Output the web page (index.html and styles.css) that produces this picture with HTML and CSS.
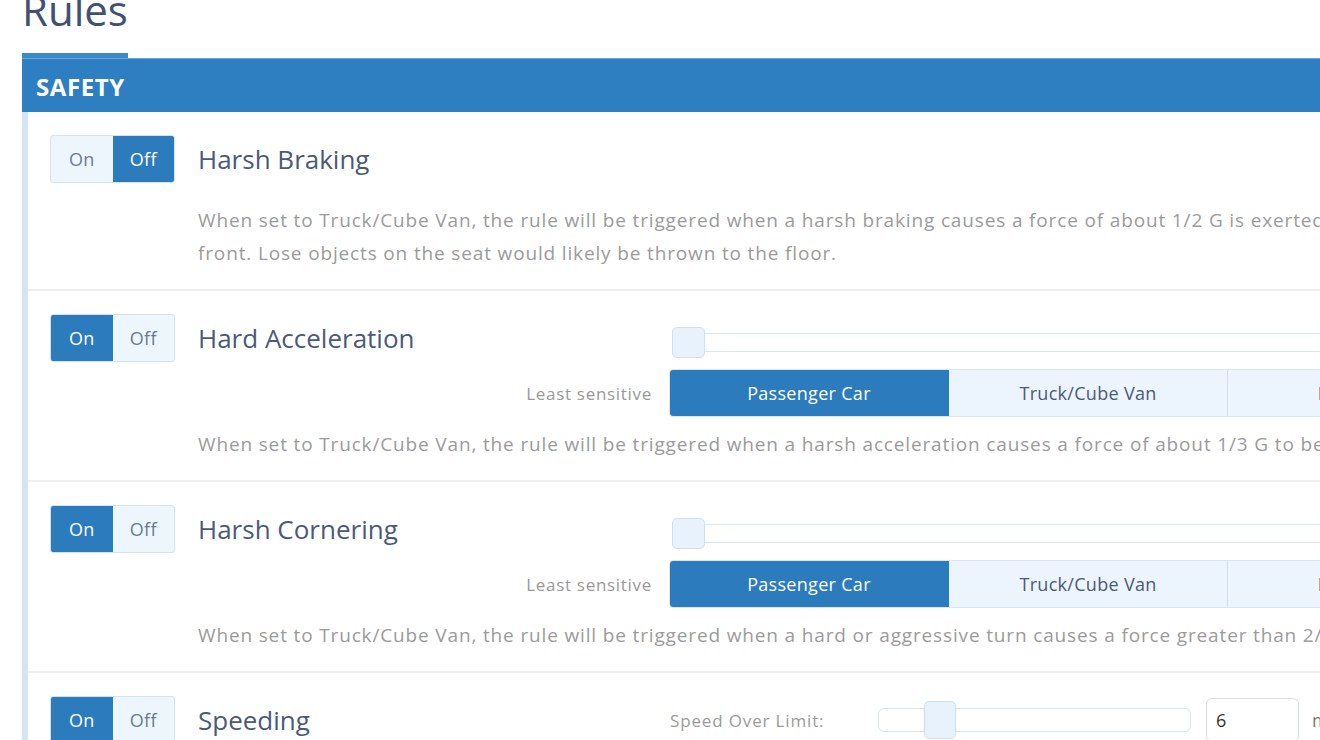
FILE: index.html
```html
<!DOCTYPE html>
<html lang="en">
<head>
<meta charset="utf-8">
<title>Rules</title>
<link rel="stylesheet" href="styles.css">
</head>
<body>
<div class="page">
  <h1 class="page-title">Rules</h1>
  <div class="tabs"><div class="tab-active"></div></div>
  <div class="section-head">SAFETY</div>
  <div class="panel">
    <div class="rule rule-simple">
      <div class="rule-head">
        <div class="toggle"><span class="tg">On</span><span class="tg tg-on">Off</span></div>
        <div class="rule-title">Harsh Braking</div>
      </div>
      <div class="desc desc-2">
        <div>When set to Truck/Cube Van, the rule will be triggered when a harsh braking causes a force of about 1/2 G is exerted toward the</div>
        <div>front. Lose objects on the seat would likely be thrown to the floor.</div>
      </div>
    </div>

    <div class="rule rule-grid">
      <div class="toggle"><span class="tg tg-on">On</span><span class="tg">Off</span></div>
      <div class="rule-title">Hard Acceleration</div>
      <div class="slider-wrap"><div class="track"><div class="handle"></div></div></div>
      <div class="sens-label">Least sensitive</div>
      <div class="seg">
        <span class="seg-btn seg-on">Passenger Car</span>
        <span class="seg-btn">Truck/Cube Van</span>
        <span class="seg-btn">Heavy Duty</span>
      </div>
      <div class="desc desc-span">When set to Truck/Cube Van, the rule will be triggered when a harsh acceleration causes a force of about 1/3 G to be exerted on the vehicle.</div>
    </div>

    <div class="rule rule-grid">
      <div class="toggle"><span class="tg tg-on">On</span><span class="tg">Off</span></div>
      <div class="rule-title">Harsh Cornering</div>
      <div class="slider-wrap"><div class="track"><div class="handle"></div></div></div>
      <div class="sens-label">Least sensitive</div>
      <div class="seg">
        <span class="seg-btn seg-on">Passenger Car</span>
        <span class="seg-btn">Truck/Cube Van</span>
        <span class="seg-btn">Heavy Duty</span>
      </div>
      <div class="desc desc-span">When set to Truck/Cube Van, the rule will be triggered when a hard or aggressive turn causes a force greater than 2/5 G on the vehicle.</div>
    </div>

    <div class="rule rule-speed">
      <div class="toggle"><span class="tg tg-on">On</span><span class="tg">Off</span></div>
      <div class="rule-title">Speeding</div>
      <div class="speed-ctrl">
        <span class="speed-label">Speed Over Limit:</span>
        <div class="speed-track"><div class="speed-handle"></div></div>
        <div class="speed-input">6</div>
        <span class="speed-unit">mph</span>
      </div>
    </div>
  </div>
</div>
</body>
</html>
```

FILE: styles.css
```css
html, body {
  margin: 0;
  padding: 0;
  overflow: hidden;
  background: #ffffff;
}
body {
  font-family: "Open Sans", "Noto Sans", sans-serif;
  width: 1320px;
  height: 740px;
}
.page {
  padding-left: 22px;
  width: 1600px;
}
.page-title {
  margin: -14px 0 0 0;
  font-size: 42px;
  line-height: 48px;
  font-weight: 400;
  color: #3f5274;
  height: 48px;
}
.tabs {
  margin-top: 19px;
  height: 5px;
}
.tab-active {
  width: 106px;
  height: 5px;
  background: #3a8ac8;
}
.section-head {
  height: 54px;
  background: #2e7fc1;
  border-top: 1px solid #6aa6d6;
  box-sizing: border-box;
  color: #fff;
  font-weight: 700;
  font-size: 24px;
  letter-spacing: 0.6px;
  display: flex;
  align-items: center;
  padding-left: 14px;
  padding-top: 1px;
}
.panel {
  border-left: 6px solid #d3e5f5;
}
.rule {
  border-bottom: 2px solid #eef0f3;
  padding-left: 22px;
}
.rule-simple {
  padding-top: 23px;
  padding-bottom: 19px;
}
.rule-head {
  display: flex;
  align-items: center;
  height: 48px;
}
.toggle {
  display: flex;
  width: 125px;
  height: 48px;
  box-sizing: border-box;
  border: 1px solid #d3e3f2;
  border-radius: 3px;
  overflow: hidden;
  background: #eef6fd;
}
.tg {
  flex: 1;
  display: flex;
  align-items: center;
  justify-content: center;
  font-size: 18px;
  color: #6c7b92;
  letter-spacing: 0.3px;
}
.tg-on {
  background: #2b7bbd;
  color: #fff;
}
.rule-title {
  font-size: 26px;
  color: #4a5a79;
  margin-left: 23px;
  letter-spacing: 0;
  white-space: nowrap;
}
.desc {
  font-size: 19px;
  color: #9b9b9b;
  line-height: 33px;
  white-space: nowrap;
  letter-spacing: 0.85px;
}
.desc-2 {
  margin-top: 21px;
  margin-left: 148px;
}
.rule-grid {
  display: grid;
  grid-template-columns: 125px 494px 900px;
  grid-template-rows: 48px auto auto;
  padding-top: 23px;
  padding-bottom: 19px;
}
.rule-grid .rule-title {
  align-self: center;
}
.slider-wrap {
  align-self: center;
  padding-left: 3px;
  margin-top: 8px;
}
.track {
  position: relative;
  height: 19px;
  box-sizing: border-box;
  border: 1px solid #d9e6f2;
  border-radius: 4px;
  background: #fff;
}
.handle {
  position: absolute;
  left: -1px;
  top: -7px;
  width: 33px;
  height: 31px;
  box-sizing: border-box;
  background: #e8f2fc;
  border: 1px solid #cfe0f1;
  border-radius: 5px;
}
.sens-label {
  grid-column: 2;
  grid-row: 2;
  margin-top: 7px;
  height: 48px;
  display: flex;
  align-items: center;
  justify-content: flex-end;
  font-size: 17px;
  color: #999;
  letter-spacing: 0.7px;
  padding-right: 17px;
}
.seg {
  grid-column: 3;
  grid-row: 2;
  margin-top: 7px;
  height: 48px;
  display: flex;
  border-radius: 4px;
  overflow: hidden;
  border: 1px solid #d9e7f4;
  box-sizing: border-box;
  background: #ecf5fd;
}
.seg-btn {
  width: 278px;
  display: flex;
  align-items: center;
  justify-content: center;
  font-size: 18px;
  color: #4a5a79;
  letter-spacing: 0.3px;
  border-right: 1px solid #cddff0;
}
.seg-on {
  background: #2b7bbd;
  color: #fff;
  border-right-color: #2b7bbd;
}
.desc-span {
  grid-column: 2 / 4;
  grid-row: 3;
  margin-left: 23px;
  margin-top: 11px;
}
.rule-speed {
  display: grid;
  grid-template-columns: 125px 495px 900px;
  align-items: center;
  padding-top: 23px;
  padding-bottom: 20px;
}
.speed-ctrl {
  display: flex;
  align-items: center;
}
.speed-label {
  font-size: 17px;
  color: #9b9b9b;
  letter-spacing: 0.85px;
  width: 208px;
  white-space: nowrap;
}
.speed-track {
  position: relative;
  width: 313px;
  height: 24px;
  box-sizing: border-box;
  border: 1px solid #d9e6f2;
  border-radius: 6px;
  background: #fff;
}
.speed-handle {
  position: absolute;
  left: 45px;
  top: -8px;
  width: 32px;
  height: 38px;
  box-sizing: border-box;
  background: #e8f2fc;
  border: 1px solid #cfe0f1;
  border-radius: 5px;
}
.speed-input {
  margin-left: 15px;
  width: 93px;
  height: 44px;
  box-sizing: border-box;
  border: 1px solid #d6dde5;
  border-radius: 6px;
  font-size: 18px;
  color: #333;
  padding-left: 9px;
  display: flex;
  align-items: center;
}
.speed-unit {
  margin-left: 13px;
  font-size: 18px;
  color: #777;
}
```
